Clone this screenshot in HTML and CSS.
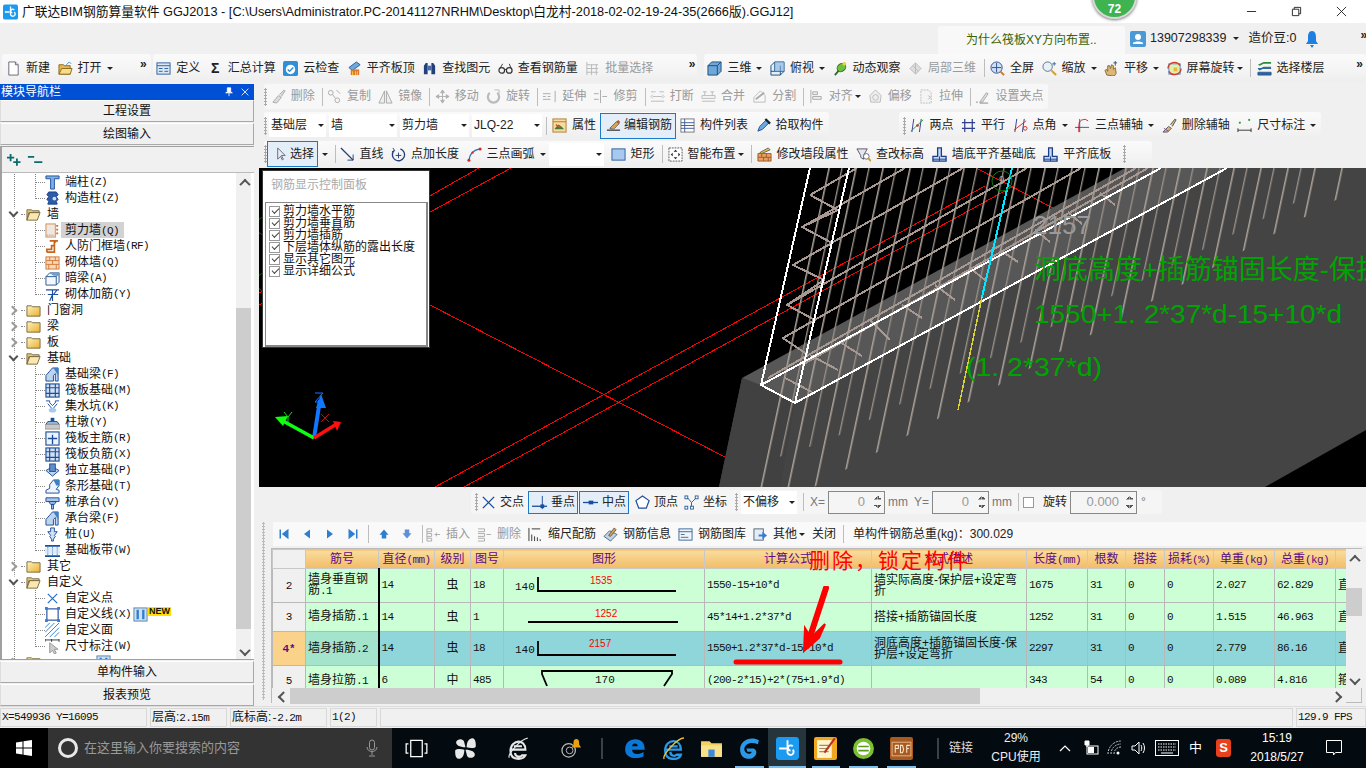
FILE: index.html
```html
<!DOCTYPE html>
<html lang="zh-CN">
<head>
<meta charset="utf-8">
<title>广联达BIM钢筋算量软件 GGJ2013</title>
<link rel="stylesheet" href="styles.css">
</head>
<body>
<svg class="defs" xmlns="http://www.w3.org/2000/svg">
<symbol id="doc" viewBox="0 0 16 16"><path d="M3 1h7l3 3v11H3z" fill="#fff" stroke="#667"/><path d="M10 1v3h3" fill="#dde" stroke="#667"/></symbol>
<symbol id="open" viewBox="0 0 16 16"><path d="M1 4h5l1 1h6v9H1z" fill="#e8b84a" stroke="#8a6a20"/><path d="M1 14l3-6h11l-2 6z" fill="#f8dc8a" stroke="#8a6a20"/><path d="M9 4l3-3 2 2" fill="none" stroke="#3a8ad0"/></symbol>
<symbol id="def" viewBox="0 0 16 16"><rect x="1" y="2" width="14" height="12" fill="#dbe8f6" stroke="#2d5f9e"/><path d="M1 5h14M3 8h4M3 11h4M9 8h4M9 11h4" stroke="#2d5f9e"/></symbol>
<symbol id="cloud" viewBox="0 0 16 16"><rect x="0" y="0" width="16" height="16" rx="2" fill="#2f8fd8"/><circle cx="8" cy="9" r="5" fill="#fff"/><path d="M5 9l2 2 4-4" fill="none" stroke="#2f8fd8" stroke-width="1.6"/></symbol>
<symbol id="flat" viewBox="0 0 16 16"><path d="M2 7l8-6 4 3-8 6z" fill="#6fa8dc" stroke="#2d5f9e"/><rect x="4" y="9" width="9" height="6" fill="#d9772a"/><path d="M6 15v-4M9 15v-4M11 15v-4" stroke="#ffd24a"/></symbol>
<symbol id="binoc" viewBox="0 0 16 16"><path d="M2 14V5l2-3h2v12zM10 14V2h2l2 3v9z" fill="#22407a"/><rect x="6" y="5" width="4" height="5" fill="#4a6aa8"/></symbol>
<symbol id="glass" viewBox="0 0 16 16"><circle cx="4" cy="10" r="3" fill="none" stroke="#333" stroke-width="1.3"/><circle cx="12" cy="10" r="3" fill="none" stroke="#333" stroke-width="1.3"/><path d="M7 9h2M2 8l3-5M14 8l-2-5" stroke="#333"/></symbol>
<symbol id="batch" viewBox="0 0 16 16"><path d="M2 1v14M2 4h12M2 8h12M2 12h12M7 4v11M12 4v11" stroke="#b8b8b8" fill="none"/></symbol>
<symbol id="cube" viewBox="0 0 16 16"><path d="M1 5l4-4h10v10l-4 4H1z" fill="#6fa8d8" stroke="#1c4d7c"/><path d="M1 5h10v10M11 5l4-4" fill="none" stroke="#1c4d7c"/></symbol>
<symbol id="cubew" viewBox="0 0 16 16"><path d="M1 5l4-4h10v10l-4 4H1z" fill="#e4eff9" stroke="#1c4d7c"/><path d="M5 1v10H1M5 11h10M11 5v10" fill="none" stroke="#1c4d7c"/><path d="M5 1h10v10H5z" fill="#7fb0dc" fill-opacity=".6"/></symbol>
<symbol id="orbit" viewBox="0 0 16 16"><path d="M2 15l6-7" stroke="#2b6a2b" stroke-width="2"/><ellipse cx="9" cy="7" rx="5" ry="4" fill="#6fbf3a" stroke="#2b6a2b" transform="rotate(-40 9 7)"/><circle cx="12" cy="3" r="2" fill="#e8d23a"/></symbol>
<symbol id="local" viewBox="0 0 16 16"><path d="M2 8l6-6 6 6-6 6z" fill="#ddd" stroke="#bbb"/><path d="M5 5l6 6M8 2v12" stroke="#bbb"/></symbol>
<symbol id="full" viewBox="0 0 16 16"><circle cx="7" cy="7" r="6" fill="#cfe0f4" stroke="#2d4f8e"/><path d="M7 2v10M2 7h10" stroke="#2d4f8e"/><path d="M11 11l4 4" stroke="#c87a2a" stroke-width="2"/></symbol>
<symbol id="zoom" viewBox="0 0 16 16"><circle cx="6" cy="6" r="5" fill="#e8f0f8" stroke="#5a6f8a"/><path d="M10 10l5 5" stroke="#d0a030" stroke-width="2.2"/><path d="M13 1v4M11 3h4" stroke="#3a6a9a"/></symbol>
<symbol id="pan" viewBox="0 0 16 16"><path d="M3 15l-2-5 2-1 1 2V5l2 0 1 3 1-4 2 1 0 4 2-2 1 6-2 3z" fill="#dcb878" stroke="#8a6a30"/><path d="M12 0v5M10 2h4" stroke="#33507a"/></symbol>
<symbol id="rot" viewBox="0 0 16 16"><rect x="2" y="3" width="12" height="11" fill="#dff0b0" stroke="#4a8ac8"/><path d="M1 8a7 7 0 0 1 13-3M15 8a7 7 0 0 1-13 3" fill="none" stroke="#d83a2a" stroke-width="1.5"/><rect x="7" y="7" width="4" height="4" fill="#e8b83a"/></symbol>
<symbol id="layer" viewBox="0 0 16 16"><path d="M1 4l6-3h8v2H7L3 5zM1 9l6-3h8v2H7L3 10z" fill="#2d8a3a"/><path d="M1 12h14v3H1zM1 8h14" fill="#2d5f9e" stroke="#2d5f9e"/></symbol>
<symbol id="g-brush" viewBox="0 0 16 16"><path d="M2 14l6-7 3 2-5 6zM9 6l5-5 1 1-4 6" fill="#ddd" stroke="#aaa"/></symbol>
<symbol id="g-copy" viewBox="0 0 16 16"><circle cx="4" cy="4" r="2.5" fill="none" stroke="#aaa"/><circle cx="11" cy="12" r="2.5" fill="none" stroke="#aaa"/><path d="M6 6l3 4M10 1l4 4" stroke="#aaa"/></symbol>
<symbol id="g-mir" viewBox="0 0 16 16"><path d="M7 2L1 15h6zM9 2l6 13H9z" fill="#eee" stroke="#aaa"/></symbol>
<symbol id="g-move" viewBox="0 0 16 16"><path d="M8 1v14M1 8h14M8 1L6 4h4zM8 15l-2-3h4zM1 8l3-2v4zM15 8l-3-2v4z" fill="#bbb" stroke="#b0b0b0"/></symbol>
<symbol id="g-rot" viewBox="0 0 16 16"><path d="M12 4a6 6 0 1 1-8 0" fill="none" stroke="#bbb" stroke-width="2.4"/><path d="M9 1h5v4" fill="none" stroke="#bbb"/></symbol>
<symbol id="g-ext" viewBox="0 0 16 16"><path d="M14 2v12M1 8h3M6 8h3M9 5h-8M9 11H1" stroke="#aaa" fill="none"/></symbol>
<symbol id="g-trim" viewBox="0 0 16 16"><path d="M8 1v14M1 5h5M1 11h5M10 8h5" stroke="#aaa" fill="none"/></symbol>
<symbol id="g-brk" viewBox="0 0 16 16"><path d="M1 3h5M10 3h5M1 13h14M3 8h10M13 6l2 2-2 2M3 6L1 8l2 2" stroke="#bbb" fill="none"/></symbol>
<symbol id="g-mrg" viewBox="0 0 16 16"><path d="M1 7h14v3H1zM1 13h14M4 7V3M12 7V3M2 3h4M10 3h4" stroke="#bbb" fill="none"/></symbol>
<symbol id="g-spl" viewBox="0 0 16 16"><path d="M2 14h12V7L9 2 2 9z" fill="none" stroke="#bbb"/><path d="M4 11l9-7" stroke="#aaa" stroke-width="2"/></symbol>
<symbol id="g-ali" viewBox="0 0 16 16"><path d="M2 1v14M4 3h5v3H4zM4 8h9v3H4z" fill="#eee" stroke="#aaa"/></symbol>
<symbol id="g-off" viewBox="0 0 16 16"><path d="M8 1l6 6-1 7H3L2 7z" fill="#eee" stroke="#bbb"/><circle cx="8" cy="9" r="3" fill="none" stroke="#bbb"/></symbol>
<symbol id="g-str" viewBox="0 0 16 16"><path d="M2 1h8l3 3v11H2z" fill="#f4f4f4" stroke="#bbb" stroke-dasharray="2 1"/><path d="M10 7l2 2-2 2" stroke="#aaa" fill="none"/></symbol>
<symbol id="g-grip" viewBox="0 0 16 16"><path d="M5 14l7-10 2 1-6 9z" fill="#ddd" stroke="#aaa"/><path d="M1 14h2M5 15h9" stroke="#888"/></symbol>
<symbol id="attr" viewBox="0 0 16 16"><rect x="1" y="1" width="14" height="14" fill="#f6dca0" stroke="#b07a30"/><path d="M1 4h14" stroke="#b07a30"/><path d="M3 11l4-4 3 2 3 3H3z" fill="#4a7a3a"/><path d="M4 7l5 3" stroke="#d0582a" stroke-width="1.6"/></symbol>
<symbol id="edit" viewBox="0 0 16 16"><path d="M1 13h14" stroke="#555" stroke-width="1.6"/><path d="M4 11l7-7 3 2-6 6z" fill="#d8a850" stroke="#666"/><path d="M11 4l2-2 2 2-1 2" fill="#c05030"/></symbol>
<symbol id="list" viewBox="0 0 16 16"><rect x="1" y="1" width="14" height="14" fill="#fff" stroke="#777"/><path d="M1 5h14M1 8h14M1 11h14M5 1v14" stroke="#3a5a9a"/></symbol>
<symbol id="pick" viewBox="0 0 16 16"><path d="M2 14l2-5 7-7 3 3-7 7z" fill="#6fa8e0" stroke="#1c4d9c"/><path d="M10 1l5 5" stroke="#123" stroke-width="2.4"/></symbol>
<symbol id="two" viewBox="0 0 16 16"><path d="M4 1L2 15M12 1l-2 14" stroke="#2d3f8e" fill="none"/><path d="M1 14L14 2" stroke="#2a9a3a"/><circle cx="8" cy="8" r="1.4" fill="#d02a2a"/></symbol>
<symbol id="para" viewBox="0 0 16 16"><path d="M4 1v14M12 1v14M1 5h14M1 11h14" stroke="#2d3f8e" stroke-width="1.3" fill="none"/></symbol>
<symbol id="ang" viewBox="0 0 16 16"><path d="M4 1L2 15M12 1l-2 14" stroke="#2d3f8e" fill="none"/><path d="M1 13L14 3" stroke="#d02a2a"/><circle cx="13" cy="11" r="2" fill="none" stroke="#d02a2a"/></symbol>
<symbol id="arc3" viewBox="0 0 16 16"><path d="M4 15V8a6 6 0 0 1 10-5" fill="none" stroke="#d02a2a"/><path d="M0 10h15M5 1v14" stroke="#2d3f8e" stroke-width=".9"/></symbol>
<symbol id="delaxis" viewBox="0 0 16 16"><path d="M1 15l6-6 3 2-4 4zM9 7l5-6 1 1-4 7" fill="#d8b878" stroke="#555"/><path d="M2 11l5 3" stroke="#7a4ac0"/></symbol>
<symbol id="dim" viewBox="0 0 16 16"><path d="M1 11v4M15 11v4M1 13h14" stroke="#333"/><rect x="2" y="4" width="2" height="2" fill="#2a9a3a"/><rect x="12" y="1" width="2" height="2" fill="#2a9a3a"/></symbol>
<symbol id="arrow" viewBox="0 0 16 16"><path d="M5 1v12l3-3 2 4 1-1-2-4h4z" fill="#e8eef6" stroke="#667"/></symbol>
<symbol id="line" viewBox="0 0 16 16"><path d="M1 1l13 13" stroke="#223f7a" stroke-width="1.4"/><path d="M14 8v6H8" fill="none" stroke="#223f7a"/></symbol>
<symbol id="addlen" viewBox="0 0 16 16"><path d="M10 2a6.500 6.500 0 1 1-7 2" fill="none" stroke="#223f7a" stroke-width="1.4"/><path d="M8 6v6M5 9h6" stroke="#223f7a"/><path d="M2 1l2 3-3 1" fill="none" stroke="#223f7a"/></symbol>
<symbol id="arc" viewBox="0 0 16 16"><path d="M2 14C3 7 7 3 14 2" fill="none" stroke="#2f6fb0" stroke-width="1.4"/><circle cx="2" cy="14" r="1.600" fill="#d02a2a"/><circle cx="14" cy="2" r="1.600" fill="#d02a2a"/><circle cx="6" cy="6" r="1.200" fill="#d02a2a"/></symbol>
<symbol id="rect" viewBox="0 0 16 16"><rect x="1" y="2" width="14" height="12" fill="#a8c8f0" stroke="#2d5f9e"/></symbol>
<symbol id="smart" viewBox="0 0 16 16"><rect x="1" y="1" width="14" height="14" fill="#fff" stroke="#555" stroke-dasharray="2 1"/><path d="M8 3v10M3 8h10M8 3L6 5h4zM8 13l-2-2h4zM3 8l2-2v4zM13 8l-2-2v4z" fill="#223"/></symbol>
<symbol id="wallpen" viewBox="0 0 16 16"><path d="M1 7h14v8H1z" fill="#e8a068" stroke="#a05a20"/><path d="M1 11h14M5 7v4M10 7v4M7 11v4M12 11v4" stroke="#a05a20"/><path d="M3 6l9-5 2 2-9 4z" fill="#e8c050" stroke="#665"/></symbol>
<symbol id="lvl" viewBox="0 0 16 16"><path d="M1 2h11L8 9v4L5 11V9z" fill="#e4e8ee" stroke="#556"/><circle cx="11" cy="10" r="3" fill="#fff" stroke="#667"/><path d="M13 12l3 3" stroke="#c89a30" stroke-width="2"/></symbol>
<symbol id="wbase" viewBox="0 0 16 16"><path d="M6 1h4v9h5v5H1v-5h5z" fill="#c8dcf4" stroke="#1c3f8c" stroke-width="1.4"/><path d="M1 13h14M8 10v5" stroke="#1c3f8c"/></symbol>
<symbol id="sx" viewBox="0 0 16 16"><path d="M2 2l12 12M14 2L2 14" stroke="#1c4d9c" stroke-width="1.5"/></symbol>
<symbol id="sperp" viewBox="0 0 16 16"><path d="M0 12h16" stroke="#1c4d9c" stroke-width="1.4"/><path d="M11 1v14" stroke="#1c4d9c"/><rect x="9" y="10" width="4" height="4" fill="#1c4d9c"/></symbol>
<symbol id="smid" viewBox="0 0 16 16"><path d="M0 8h16" stroke="#1c4d9c" stroke-width="1.4"/><rect x="6" y="6" width="5" height="4" fill="#1c4d9c"/></symbol>
<symbol id="spent" viewBox="0 0 16 16"><path d="M8 1l7 5-3 8H4L1 6z" fill="#fff" stroke="#1c4d9c" stroke-width="1.3"/></symbol>
<symbol id="scoord" viewBox="0 0 16 16"><path d="M3 2l5 6 6-6M8 8v6" stroke="#2d5f9e" fill="none"/><g fill="#fff" stroke="#2d5f9e"><rect x="1" y="1" width="3" height="3"/><rect x="12" y="1" width="3" height="3"/><rect x="1" y="12" width="3" height="3"/><rect x="7" y="12" width="3" height="3"/></g></symbol>
<symbol id="first" viewBox="0 0 16 16"><path d="M2 2h2v12H2zM14 1L5 8l9 7z" fill="#2f7fd0"/></symbol>
<symbol id="prev" viewBox="0 0 16 16"><path d="M12 2L4 8l8 6z" fill="#2f7fd0"/></symbol>
<symbol id="next" viewBox="0 0 16 16"><path d="M4 2l8 6-8 6z" fill="#2f7fd0"/></symbol>
<symbol id="last" viewBox="0 0 16 16"><path d="M12 2h2v12h-2zM2 1l9 7-9 7z" fill="#2f7fd0"/></symbol>
<symbol id="up" viewBox="0 0 16 16"><path d="M8 2l6 7h-3v5H5V9H2z" fill="#2f7fd0"/></symbol>
<symbol id="down" viewBox="0 0 16 16"><path d="M8 14l6-7h-3V2H5v5H2z" fill="#5f8fd8"/></symbol>
<symbol id="ins" viewBox="0 0 16 16"><path d="M1 2h5v3H1M1 7h5v3H1M1 12h5v3H1M1 2v13M9 8h6M11 6v4" stroke="#aaa" fill="none"/></symbol>
<symbol id="rem" viewBox="0 0 16 16"><path d="M1 2h7v3H1M1 7h7v3H1M1 12h7v3H1M10 8h5" stroke="#aaa" fill="none"/></symbol>
<symbol id="scale" viewBox="0 0 16 16"><path d="M1 1v14M4 8v7M7 10v5M10 11v4M13 13v2M4 2h9" stroke="#333" fill="none"/></symbol>
<symbol id="info" viewBox="0 0 16 16"><path d="M1 10l6-6 8 4-7 7z" fill="#bcd4ec" stroke="#567"/><path d="M6 9l6-8 2 2-6 7z" fill="#d8a850" stroke="#654"/></symbol>
<symbol id="lib" viewBox="0 0 16 16"><rect x="1" y="2" width="14" height="12" fill="#eef4fb" stroke="#3a6a9a"/><path d="M1 5h14" stroke="#3a6a9a"/><path d="M3 8h4M3 11h8" stroke="#567"/></symbol>
<symbol id="other" viewBox="0 0 16 16"><rect x="1" y="2" width="10" height="12" fill="#e4ecf6" stroke="#567"/><path d="M6 8h4V5l5 4-5 4v-3H6z" fill="#3a7ad0"/></symbol>
<symbol id="fo" viewBox="0 0 16 16"><path d="M1 3h5l1 1h7v2H3l-2 8z" fill="#e8c878" stroke="#7a6a40"/><path d="M1 14l3-8h11l-3 8z" fill="#fbe8b0" stroke="#7a6a40"/></symbol>
<symbol id="fc" viewBox="0 0 16 16"><path d="M1 3h5l1 1h8v10H1z" fill="url(#fg)" stroke="#7a6a40"/></symbol>
<linearGradient id="fg" x1="0" y1="0" x2="1" y2="1"><stop offset="0" stop-color="#fff3c0"/><stop offset="1" stop-color="#e8b030"/></linearGradient>
<symbol id="ta" viewBox="0 0 16 16"><path d="M1 1h14v3H10v11H6V4H1z" fill="#7fb0e4" stroke="#1c4d9c"/></symbol>
<symbol id="tb" viewBox="0 0 16 16"><path d="M4 1h8l2 3-2 2 2 3-2 2 1 3H3l1-3-2-2 2-3-2-2z" fill="#2a5ca8" stroke="#1c3f8c"/><circle cx="10" cy="8" r="2" fill="#cfe0f4"/></symbol>
<symbol id="tc" viewBox="0 0 16 16"><rect x="1" y="1" width="10" height="14" fill="#f0e8e0" stroke="#d08a50"/><path d="M13 2v12" stroke="#d06a20" stroke-dasharray="2 2" stroke-width="2"/><path d="M2 13h8" stroke="#888" stroke-dasharray="1 1"/></symbol>
<symbol id="td" viewBox="0 0 16 16"><path d="M2 14h8V2h3v1M5 2h6v2M2 14v-3h5V7h3" fill="none" stroke="#c8641e" stroke-width="1.8"/></symbol>
<symbol id="te" viewBox="0 0 16 16"><rect x="1" y="2" width="14" height="13" fill="#f8d8b8" stroke="#d07a3a"/><path d="M1 6h14M1 10h14M5 2v4M11 2v4M8 6v4M4 10v5M12 10v5" stroke="#d07a3a"/></symbol>
<symbol id="tf" viewBox="0 0 16 16"><path d="M1 6l4-4h10v10l-3 3H1z" fill="#f4f8fc" stroke="#25588f"/><path d="M1 6h11v9M12 6l3-4" fill="none" stroke="#25588f"/><path d="M5 2h10v3H9z" fill="#6f9fd0"/></symbol>
<symbol id="tg" viewBox="0 0 16 16"><path d="M1 3h14M8 3v12M3 3h10l-4 5M3 8h11M5 15l3-7" fill="none" stroke="#1c4d9c" stroke-width="1.2"/></symbol>
<symbol id="th" viewBox="0 0 16 16"><path d="M1 15V9l7-8h6v14h-3V7l-2 2v6z" fill="#bcd4ec" stroke="#1c4d9c"/><path d="M9 1h5v8z" fill="#3f7fc4"/></symbol>
<symbol id="ti" viewBox="0 0 16 16"><rect x="1" y="1" width="14" height="14" fill="#cfe0f4" stroke="#1c4d9c" stroke-width="1.2"/><path d="M1 5h14M1 11h14M5 1v14M11 1v14" stroke="#1c4d9c" stroke-width="1.2"/></symbol>
<symbol id="tj" viewBox="0 0 16 16"><path d="M1 2h4v2l3 3 3-3V2h4M3 5l5 6 5-6" fill="none" stroke="#1c4d9c"/><ellipse cx="8" cy="12" rx="4" ry="2.500" fill="#a8c8f0"/></symbol>
<symbol id="tk" viewBox="0 0 16 16"><rect x="6" y="3" width="4" height="4" fill="#1c4d9c"/><path d="M3 7h10l2 3H1z" fill="#9cc0e4" stroke="#1c4d9c"/><rect x="0" y="10" width="16" height="5" fill="#c8c8c8" stroke="#999"/></symbol>
<symbol id="tl" viewBox="0 0 16 16"><rect x="1" y="1" width="14" height="14" fill="#eef4fb" stroke="#1c4d9c" stroke-width="1.2"/><path d="M8 4v10M3 8h10" stroke="#1c4d9c" stroke-width="1.4"/></symbol>
<symbol id="tn" viewBox="0 0 16 16"><path d="M1 8l7-4 7 4-7 6z" fill="#bcd4ec" stroke="#1c4d9c"/><rect x="5" y="1" width="6" height="8" fill="#5f8fc8" stroke="#1c4d9c"/></symbol>
<symbol id="to" viewBox="0 0 16 16"><path d="M1 15v-3l4-2V6l4-5h6v6l-3 4 3 1v3z" fill="#eef4fb" stroke="#1c4d9c"/><path d="M9 1h6v6h-3z" fill="#3f7fc4"/></symbol>
<symbol id="tp" viewBox="0 0 16 16"><path d="M1 3h14v4H1zM4 7h8l-2 3H6zM7 10h2v5H7z" fill="#a8c8f0" stroke="#1c4d9c"/></symbol>
<symbol id="tq" viewBox="0 0 16 16"><path d="M6 1h4v4h3l-3 4 1 1-2 3v2H7v-2l-2-3 1-1-3-4h3z" fill="#cfe0f4" stroke="#1c4d9c"/></symbol>
<symbol id="tr" viewBox="0 0 16 16"><path d="M0 3h16M0 14h16" stroke="#1c4d9c" stroke-width="2"/><path d="M3 3v11M8 3v11M13 3v11" stroke="#3f7fc4"/><rect x="0" y="5" width="16" height="7" fill="#cfe0f4" fill-opacity=".6"/></symbol>
<symbol id="ts" viewBox="0 0 16 16"><path d="M3 3l10 10M13 3L3 13" stroke="#2a6fc0" stroke-width="1.3"/></symbol>
<symbol id="tt" viewBox="0 0 16 16"><rect x="2" y="2" width="12" height="12" fill="#fff" stroke="#1c4d9c" stroke-width="1.2"/><g fill="#2f7fe0"><rect y="0" width="3" height="3"/><rect x="13" width="3" height="3"/><rect y="13" width="3" height="3"/><rect x="13" y="13" width="3" height="3"/></g></symbol>
<symbol id="tu" viewBox="0 0 16 16"><path d="M0 5l5-5M0 10L10 0M0 15L15 0M5 15L15 5M10 15l5-5" stroke="#2f7fd0"/></symbol>
<symbol id="tv" viewBox="0 0 16 16"><path d="M0 1h15M0 0v3M7 0v3M15 0v3" stroke="#333"/><path d="M5 4v11l3-3 2 4 2-1-2-4h4z" fill="#ccc" stroke="#999"/></symbol>
<symbol id="cfg" viewBox="0 0 16 16"><rect x="1" y="1" width="14" height="14" fill="#cfe0f4" stroke="#5a7fa8"/><path d="M5 3v10M11 3v10" stroke="#2f7fd0" stroke-width="2.500"/></symbol>
<symbol id="appmark" viewBox="0 0 16 16"><rect width="16" height="16" rx="2" fill="#1a9af0"/><path d="M8 2v8a2.500 2.500 0 1 0 4-2M2 8h5M12 6a2 2 0 1 0-2 3" fill="none" stroke="#fff" stroke-width="1.400"/></symbol>
</svg>

<header class="titlebar">
  <span class="appicon"><svg><use href="#appmark"/></svg></span>
  <span class="titletext">广联达BIM钢筋算量软件 GGJ2013 - [C:\Users\Administrator.PC-20141127NRHM\Desktop\白龙村-2018-02-02-19-24-35(2666版).GGJ12]</span>
  <div class="winctl">
    <svg viewBox="0 0 12 12"><path d="M1 6h10" stroke="#222"/></svg>
    <svg viewBox="0 0 12 12"><path d="M1.500 3.500h7v7h-7zM3.500 3.500v-2h7v7h-2" fill="none" stroke="#222"/></svg>
    <svg viewBox="0 0 12 12"><path d="M1 1l10 10M11 1L1 11" stroke="#222"/></svg>
  </div>
</header>
<div class="badge">72</div>

<div class="newsrow">
  <div class="bubble">为什么筏板XY方向布置..</div>
  <div class="user">
    <svg class="i" viewBox="0 0 16 16"><rect width="16" height="16" rx="2" fill="#4a9ad8"/><circle cx="8" cy="6" r="3" fill="#fff"/><path d="M3 13h10v-1c-1-2-9-2-10 0z" fill="#fff"/></svg>
    <span>13907298339</span><i class="caret"></i>
    <span class="bean">造价豆:0</span>
    <svg class="bell" viewBox="0 0 12 18"><path d="M6 1c3 0 4 3 4 6v4l2 3H0l2-3V7c0-3 1-6 4-6z" fill="#1e7fe0"/><path d="M4 15h4l-2 3z" fill="#1e7fe0"/></svg>
  </div>
  <span class="more">»</span>
</div>

<div class="toolrow top">
  <div class="grp g-file">
    <span class="t"><svg class="i"><use href="#doc"/></svg><b>新建</b></span>
    <span class="t"><svg class="i"><use href="#open"/></svg><b>打开</b><i class="caret"></i></span>
    <span class="more m-file">»</span>
  </div>
  <div class="grp g-calc">
    <span class="t"><svg class="i"><use href="#def"/></svg><b>定义</b></span>
    <span class="t"><em class="sigma">Σ</em><b>汇总计算</b></span>
    <span class="t"><svg class="i"><use href="#cloud"/></svg><b>云检查</b></span>
    <span class="t"><svg class="i"><use href="#flat"/></svg><b>平齐板顶</b></span>
    <span class="t"><svg class="i"><use href="#binoc"/></svg><b>查找图元</b></span>
    <span class="t"><svg class="i"><use href="#glass"/></svg><b>查看钢筋量</b></span>
    <span class="t off"><svg class="i"><use href="#batch"/></svg><b>批量选择</b></span>
    <span class="more m-calc">»</span>
  </div>
  <div class="grp g-view">
    <span class="t"><svg class="i"><use href="#cube"/></svg><b>三维</b><i class="caret"></i></span>
    <span class="t"><svg class="i"><use href="#cubew"/></svg><b>俯视</b><i class="caret"></i></span>
    <span class="t"><svg class="i"><use href="#orbit"/></svg><b>动态观察</b></span>
    <span class="t off"><svg class="i"><use href="#local"/></svg><b>局部三维</b></span>
    <i class="sep"></i>
    <span class="t"><svg class="i"><use href="#full"/></svg><b>全屏</b></span>
    <span class="t"><svg class="i"><use href="#zoom"/></svg><b>缩放</b><i class="caret"></i></span>
    <span class="t"><svg class="i"><use href="#pan"/></svg><b>平移</b><i class="caret"></i></span>
    <span class="t"><svg class="i"><use href="#rot"/></svg><b>屏幕旋转</b><i class="caret near"></i></span>
    <i class="sep"></i>
    <span class="t"><svg class="i"><use href="#layer"/></svg><b>选择楼层</b></span>
    <span class="more m-view">»</span>
  </div>
</div>

<div class="workspace">
  <aside class="nav">
    <div class="navhead"><span>模块导航栏</span><span class="navctl"><svg viewBox="0 0 12 12"><path d="M4 1h4v5l2 1H2l2-1zM6 7v4" fill="#fff" stroke="#fff"/></svg><svg viewBox="0 0 12 12"><path d="M2 2l8 8M10 2l-8 8" stroke="#fff"/></svg></span></div>
    <div class="navbtn">工程设置</div>
    <div class="navbtn">绘图输入</div>
    <div class="treebox">
      <div class="treetools"><svg viewBox="0 0 20 14"><path d="M3 1h2v3h3v2H5v3H3V6H0V4h3zM10 6h2v3h3v2h-3v3h-2v-3H7V9h3z" fill="#0d6a6a"/></svg><svg viewBox="0 0 20 14"><path d="M1 3h7v2H1zM8 9h9v2H8z" fill="#0d6a6a"/></svg></div>
      <div class="treewrap">
        <div class="tree">
          <div class="leaf"><i class="dash"></i><svg class="ti"><use href="#ta"/></svg>端柱<u>(Z)</u></div>
          <div class="leaf last"><i class="dash"></i><svg class="ti"><use href="#tb"/></svg>构造柱<u>(Z)</u></div>
          <div class="node"><i class="chev open"></i><i class="dash d2"></i><svg class="fi"><use href="#fo"/></svg>墙</div>
          <div class="leaf sel"><i class="dash"></i><svg class="ti"><use href="#tc"/></svg><span>剪力墙<u>(Q)</u></span></div>
          <div class="leaf"><i class="dash"></i><svg class="ti"><use href="#td"/></svg>人防门框墙<u>(RF)</u></div>
          <div class="leaf"><i class="dash"></i><svg class="ti"><use href="#te"/></svg>砌体墙<u>(Q)</u></div>
          <div class="leaf"><i class="dash"></i><svg class="ti"><use href="#tf"/></svg>暗梁<u>(A)</u></div>
          <div class="leaf last"><i class="dash"></i><svg class="ti"><use href="#tg"/></svg>砌体加筋<u>(Y)</u></div>
          <div class="node"><i class="chev"></i><i class="dash d2"></i><svg class="fi"><use href="#fc"/></svg>门窗洞</div>
          <div class="node"><i class="chev"></i><i class="dash d2"></i><svg class="fi"><use href="#fc"/></svg>梁</div>
          <div class="node"><i class="chev"></i><i class="dash d2"></i><svg class="fi"><use href="#fc"/></svg>板</div>
          <div class="node"><i class="chev open"></i><i class="dash d2"></i><svg class="fi"><use href="#fo"/></svg>基础</div>
          <div class="leaf"><i class="dash"></i><svg class="ti"><use href="#th"/></svg>基础梁<u>(F)</u></div>
          <div class="leaf"><i class="dash"></i><svg class="ti"><use href="#ti"/></svg>筏板基础<u>(M)</u></div>
          <div class="leaf"><i class="dash"></i><svg class="ti"><use href="#tj"/></svg>集水坑<u>(K)</u></div>
          <div class="leaf"><i class="dash"></i><svg class="ti"><use href="#tk"/></svg>柱墩<u>(Y)</u></div>
          <div class="leaf"><i class="dash"></i><svg class="ti"><use href="#tl"/></svg>筏板主筋<u>(R)</u></div>
          <div class="leaf"><i class="dash"></i><svg class="ti"><use href="#ti"/></svg>筏板负筋<u>(X)</u></div>
          <div class="leaf"><i class="dash"></i><svg class="ti"><use href="#tn"/></svg>独立基础<u>(P)</u></div>
          <div class="leaf"><i class="dash"></i><svg class="ti"><use href="#to"/></svg>条形基础<u>(T)</u></div>
          <div class="leaf"><i class="dash"></i><svg class="ti"><use href="#tp"/></svg>桩承台<u>(V)</u></div>
          <div class="leaf"><i class="dash"></i><svg class="ti"><use href="#th"/></svg>承台梁<u>(F)</u></div>
          <div class="leaf"><i class="dash"></i><svg class="ti"><use href="#tq"/></svg>桩<u>(U)</u></div>
          <div class="leaf last"><i class="dash"></i><svg class="ti"><use href="#tr"/></svg>基础板带<u>(W)</u></div>
          <div class="node"><i class="chev"></i><i class="dash d2"></i><svg class="fi"><use href="#fc"/></svg>其它</div>
          <div class="node"><i class="chev open"></i><i class="dash d2"></i><svg class="fi"><use href="#fo"/></svg>自定义</div>
          <div class="leaf"><i class="dash"></i><svg class="ti"><use href="#ts"/></svg>自定义点</div>
          <div class="leaf"><i class="dash"></i><svg class="ti"><use href="#tt"/></svg>自定义线<u>(X)</u><svg class="cfg"><use href="#cfg"/></svg><span class="new">NEW</span></div>
          <div class="leaf"><i class="dash"></i><svg class="ti"><use href="#tu"/></svg>自定义面</div>
          <div class="leaf last"><i class="dash"></i><svg class="ti"><use href="#tv"/></svg>尺寸标注<u>(W)</u></div>
          <div class="node"><i class="chev"></i><i class="dash d2"></i><svg class="fi"><use href="#fc"/></svg><i class="pad"></i><svg class="cfg"><use href="#cfg"/></svg></div>
        </div>
        <div class="vbar treebar"><i class="a-up"></i><div class="tr1"></div><div class="th1"></div><div class="tr2"></div><i class="a-dn"></i></div>
      </div>
    </div>
    <div class="navbtn">单构件输入</div>
    <div class="navbtn endbtn">报表预览</div>
  </aside>

  <main class="work">
    <div class="row r-edit">
      <div class="grp">
        <i class="handle"></i>
        <span class="t off"><svg class="i"><use href="#g-brush"/></svg><b>删除</b></span><i class="sep"></i>
        <span class="t off"><svg class="i"><use href="#g-copy"/></svg><b>复制</b></span>
        <span class="t off"><svg class="i"><use href="#g-mir"/></svg><b>镜像</b></span><i class="sep"></i>
        <span class="t off"><svg class="i"><use href="#g-move"/></svg><b>移动</b></span>
        <span class="t off"><svg class="i"><use href="#g-rot"/></svg><b>旋转</b></span><i class="sep"></i>
        <span class="t off"><svg class="i"><use href="#g-ext"/></svg><b>延伸</b></span>
        <span class="t off"><svg class="i"><use href="#g-trim"/></svg><b>修剪</b></span><i class="sep"></i>
        <span class="t off"><svg class="i"><use href="#g-brk"/></svg><b>打断</b></span>
        <span class="t off"><svg class="i"><use href="#g-mrg"/></svg><b>合并</b></span>
        <span class="t off"><svg class="i"><use href="#g-spl"/></svg><b>分割</b></span><i class="sep"></i>
        <span class="t off"><svg class="i"><use href="#g-ali"/></svg><b>对齐</b><i class="caret near"></i></span>
        <span class="t off"><svg class="i"><use href="#g-off"/></svg><b>偏移</b></span>
        <span class="t off"><svg class="i"><use href="#g-str"/></svg><b>拉伸</b></span><i class="sep"></i>
        <span class="t off"><svg class="i"><use href="#g-grip"/></svg><b>设置夹点</b></span>
      </div>
    </div>
    <div class="row r-comp">
      <div class="grp">
        <i class="handle"></i>
        <div class="combos">
          <span class="combo c57">基础层<i class="caret"></i></span>
          <span class="combo c68">墙<i class="caret"></i></span>
          <span class="combo c69">剪力墙<i class="caret"></i></span>
          <span class="combo c70">JLQ-22<i class="caret"></i></span>
        </div>
        <i class="sep pull"></i>
        <span class="t"><svg class="i"><use href="#attr"/></svg><b>属性</b></span>
        <span class="t btn b-edit"><svg class="i"><use href="#edit"/></svg><b>编辑钢筋</b></span>
        <span class="t"><svg class="i"><use href="#list"/></svg><b>构件列表</b></span>
        <span class="t"><svg class="i"><use href="#pick"/></svg><b>拾取构件</b></span>
      </div>
      <div class="grp g-axis">
        <i class="handle"></i>
        <span class="t"><svg class="i"><use href="#two"/></svg><b>两点</b></span>
        <span class="t"><svg class="i"><use href="#para"/></svg><b>平行</b></span>
        <span class="t"><svg class="i"><use href="#ang"/></svg><b>点角</b><i class="caret"></i></span>
        <span class="t"><svg class="i"><use href="#arc3"/></svg><b>三点辅轴</b><i class="caret"></i></span>
        <span class="t"><svg class="i"><use href="#delaxis"/></svg><b>删除辅轴</b></span>
        <span class="t"><svg class="i"><use href="#dim"/></svg><b>尺寸标注</b><i class="caret"></i></span>
      </div>
    </div>
    <div class="row r-draw">
      <div class="grp">
        <i class="handle"></i>
        <span class="t btn b-sel"><svg class="i"><use href="#arrow"/></svg><b>选择</b></span><i class="caret after"></i>
        <i class="sep s1"></i>
        <span class="t"><svg class="i"><use href="#line"/></svg><b>直线</b></span>
        <span class="t"><svg class="i"><use href="#addlen"/></svg><b>点加长度</b></span>
        <span class="t"><svg class="i"><use href="#arc"/></svg><b>三点画弧</b><i class="caret"></i></span>
        <span class="combo c55 pull"><i class="caret"></i></span>
        <span class="t tight"><svg class="i"><use href="#rect"/></svg><b>矩形</b></span><i class="sep"></i>
        <span class="t tight"><svg class="i"><use href="#smart"/></svg><b>智能布置</b><i class="caret near"></i></span><i class="sep"></i>
        <span class="t tight"><svg class="i"><use href="#wallpen"/></svg><b>修改墙段属性</b></span>
        <span class="t"><svg class="i"><use href="#lvl"/></svg><b>查改标高</b></span>
        <span class="t"><svg class="i"><use href="#wbase"/></svg><b>墙底平齐基础底</b></span>
        <span class="t"><svg class="i"><use href="#wbase"/></svg><b>平齐底板</b></span>
        <i class="handle h-end"></i>
      </div>
    </div>

    <div class="canvas">
      <svg class="scene" viewBox="259 168 1107 319" xmlns="http://www.w3.org/2000/svg">
        <defs>
          <pattern id="rb1" width="27" height="8" patternUnits="userSpaceOnUse" patternTransform="skewX(-12)"><rect width="1.6" height="8" fill="#aaa097"/></pattern>
          <pattern id="rb2" x="13" width="27" height="8" patternUnits="userSpaceOnUse" patternTransform="skewX(-12)"><rect width="1.4" height="8" fill="#978f88"/></pattern>
        </defs>
        <g stroke="#f00" fill="none" class="crisp">
          <path d="M259 293L479 168M259 305L511 168M430 305L725 457M976 168L1053 208"/>
          <path d="M435 487L709 337L985 186M464 487L709 353L1012 187"/>
        </g>
        <circle cx="265" cy="226" r="9" fill="none" stroke="#0a6a0a"/>
        <circle cx="265" cy="282" r="9" fill="none" stroke="#0a6a0a"/>
        <path d="M742 378L1125 168H1227L795 403Z" fill="#575757"/>
        <path d="M719 487L742 378L795 403L1227 168H1366V430L1265 487Z" fill="#444"/>
        <path d="M742 378L761 385L795 403L780 487H719Z" fill="#414141"/>
        <polygon points="745,487 814,487 1345,195 1345,168 810,168 772,330" fill="url(#rb1)"/>
        <polygon points="770,460 830,440 1310,195 1310,168 825,168 790,330" fill="url(#rb2)"/>
        <g stroke="#a89a92" stroke-width="2" fill="none" class="crisp">
          <path d="M810 195L857 168M802 227L905 168M793 265L963 168M787 305L1027 168M783 338L1081 168M768 378L1136 168M802 365L1148 168"/>
          <path d="M810 195L838 210L802 227L832 243L793 265L824 280L787 305L815 320L783 338L808 355L768 378"/>
          <path d="M785 378L812 392M810 355L838 370M840 342L862 356M870 320L890 340M902 305L922 318M935 285L955 300M970 268L985 280M1000 250L1018 262M1035 230L1050 242M1068 212L1082 224M1100 193L1115 205"/>
        </g>
        <g stroke="#fff" stroke-width="2" fill="none" class="crisp">
          <path d="M810 168L761 385L795 403L849 168M761 385L1161 168M795 403L1227 168"/>
        </g>
        <path d="M1012 168L982 297" stroke="#00e8ff" stroke-width="2" class="crisp"/>
        <path d="M982 297L958 410" stroke="#d8d030" stroke-width="1.500" class="crisp"/>
        <circle cx="1002" cy="181" r="10" fill="none" stroke="#0a7a0a"/>
        <text x="999" y="184" class="s-num">9</text>
        <text x="1033" y="234" class="s-2157" textLength="58" lengthAdjust="spacingAndGlyphs">2157</text>
        <text x="1034" y="279" class="s-green s-cjk">洞底高度+插筋锚固长度-保护层</text>
        <text x="1034" y="323" class="s-green" textLength="308" lengthAdjust="spacingAndGlyphs">1550+1. 2*37*d-15+10*d</text>
        <text x="966" y="376" class="s-green" textLength="136" lengthAdjust="spacingAndGlyphs">(1. 2*37*d)</text>
        <g>
          <path d="M314 438L320 400" stroke="#1078ff" stroke-width="4"/><path d="M321 394L316 408H326Z" fill="#1078ff"/>
          <path d="M314 438L283 421" stroke="#10ff10" stroke-width="3.500"/><path d="M275 417L288 416L283 426Z" fill="#10ff10"/>
          <path d="M314 438L335 425" stroke="#ff1010" stroke-width="3.500"/><path d="M341 422L333 421L337 431Z" fill="#ff1010"/>
          <path d="M315 393h8l-8 9h8" stroke="#1078ff" fill="none"/>
          <path d="M284 412l4 5 4-5M288 417v6" stroke="#10e010" fill="none"/>
          <path d="M321 414l8 8M329 414l-8 8" stroke="#c01010" fill="none"/>
        </g>
      </svg>
      <div class="panel">
        <div class="p-title">钢筋显示控制面板</div>
        <div class="p-list">
          <label class="chk"><i class="box"></i>剪力墙水平筋</label>
          <label class="chk"><i class="box"></i>剪力墙垂直筋</label>
          <label class="chk"><i class="box"></i>剪力墙插筋</label>
          <label class="chk"><i class="box"></i>下层墙体纵筋的露出长度</label>
          <label class="chk"><i class="box"></i>显示其它图元</label>
          <label class="chk"><i class="box"></i>显示详细公式</label>
        </div>
      </div>
    </div>

    <div class="row r-snap">
      <div class="grp">
        <i class="handle"></i>
        <span class="t"><svg class="i"><use href="#sx"/></svg><b>交点</b></span>
        <div class="duo">
          <span class="t btn"><svg class="i"><use href="#sperp"/></svg><b>垂点</b></span>
          <span class="t btn"><svg class="i"><use href="#smid"/></svg><b>中点</b></span>
        </div>
        <span class="t"><svg class="i"><use href="#spent"/></svg><b>顶点</b></span>
        <span class="t"><svg class="i"><use href="#scoord"/></svg><b>坐标</b></span>
        <i class="handle h-mid"></i>
        <span class="combo c56">不偏移<i class="caret"></i></span>
        <i class="sep"></i>
        <span class="lab x">X=</span><span class="spin s57">0<i class="arrows"></i></span><span class="lab">mm</span>
        <span class="lab">Y=</span><span class="spin s57">0<i class="arrows"></i></span><span class="lab">mm</span>
        <i class="sep"></i>
        <i class="emptybox"></i>
        <span class="lab dark">旋转</span><span class="spin s67">0.000<i class="arrows"></i></span><span class="lab deg">°</span>
      </div>
    </div>

    <div class="lower">
      <div class="tabletool">
        <span class="nv"><svg class="i"><use href="#first"/></svg></span>
        <span class="nv"><svg class="i"><use href="#prev"/></svg></span>
        <span class="nv"><svg class="i"><use href="#next"/></svg></span>
        <span class="nv"><svg class="i"><use href="#last"/></svg></span>
        <i class="sep"></i>
        <span class="nv"><svg class="i"><use href="#up"/></svg></span>
        <span class="nv"><svg class="i"><use href="#down"/></svg></span>
        <i class="sep s2"></i>
        <span class="t off"><svg class="i"><use href="#ins"/></svg><b>插入</b></span>
        <span class="t off"><svg class="i"><use href="#rem"/></svg><b>删除</b></span>
        <span class="t"><svg class="i"><use href="#scale"/></svg><b>缩尺配筋</b></span>
        <span class="t"><svg class="i"><use href="#info"/></svg><b>钢筋信息</b></span>
        <span class="t"><svg class="i"><use href="#lib"/></svg><b>钢筋图库</b></span>
        <span class="t"><svg class="i"><use href="#other"/></svg><b>其他</b><i class="caret near"></i></span>
        <span class="t"><b>关闭</b></span>
        <i class="sep"></i>
        <span class="t total"><b>单构件钢筋总重(kg)：300.029</b></span>
      </div>
      <div class="gridbox">
        <div class="gridmain">
          <div class="tablewrap">
            <table class="tbl">
              <colgroup><col class="k33"><col class="k73"><col class="k56"><col class="k36"><col class="k33"><col class="k201"><col class="k167"><col class="k155"><col class="k61"><col class="k38"><col class="k39"><col class="k49"><col class="k61"><col class="k61"><col class="k11"></colgroup>
              <thead><tr class="h19"><th class="rh"></th><th>筋号</th><th>直径<u>(mm)</u></th><th>级别</th><th>图号</th><th>图形</th><th>计算公式</th><th>公式描述</th><th>长度<u>(mm)</u></th><th>根数</th><th>搭接</th><th>损耗<u>(%)</u></th><th>单重<u>(kg)</u></th><th>总重<u>(kg)</u></th><th></th></tr></thead>
              <tbody>
                <tr class="h34">
                  <td class="rh">2</td><td class="nm">墙身垂直钢筋<u>.1</u></td><td class="num fz">14</td><td class="ctr">虫</td><td class="num">18</td>
                  <td class="shape"><svg viewBox="0 0 201 33"><text x="11" y="21" class="sh-b">140</text><path d="M34 8V22H172" fill="none" stroke="#000" stroke-width="1.800"/><text x="86" y="15" class="sh-r">1535</text></svg></td>
                  <td class="num">1550-15+10*d</td><td class="ds">墙实际高度-保护层+设定弯折</td><td class="num">1675</td><td class="num">31</td><td class="num">0</td><td class="num">0</td><td class="num">2.027</td><td class="num">62.829</td><td>直</td>
                </tr>
                <tr class="h29">
                  <td class="rh">3</td><td class="nm">墙身插筋<u>.1</u></td><td class="num fz">14</td><td class="ctr">虫</td><td class="num">1</td>
                  <td class="shape"><svg viewBox="0 0 201 28"><path d="M24 19H174" stroke="#000" stroke-width="1.800"/><text x="91" y="14" class="sh-r">1252</text></svg></td>
                  <td class="num">45*14+1.2*37*d</td><td class="ds">搭接+插筋锚固长度</td><td class="num">1252</td><td class="num">31</td><td class="num">0</td><td class="num">0</td><td class="num">1.515</td><td class="num">46.963</td><td>直</td>
                </tr>
                <tr class="h34 cur">
                  <td class="rh"><strong>4*</strong></td><td class="nm">墙身插筋<u>.2</u></td><td class="num fz">14</td><td class="ctr">虫</td><td class="num">18</td>
                  <td class="shape"><svg viewBox="0 0 201 33"><text x="11" y="21" class="sh-b">140</text><path d="M34 9V23H172" fill="none" stroke="#000" stroke-width="1.800"/><text x="85" y="15" class="sh-r">2157</text></svg></td>
                  <td class="num">1550+1.2*37*d-15+10*d</td><td class="ds">洞底高度+插筋锚固长度-保护层+设定弯折</td><td class="num">2297</td><td class="num">31</td><td class="num">0</td><td class="num">0</td><td class="num">2.779</td><td class="num">86.16</td><td>直</td>
                </tr>
                <tr class="h30">
                  <td class="rh">5</td><td class="nm">墙身拉筋<u>.1</u></td><td class="num fz">6</td><td class="ctr">中</td><td class="num">485</td>
                  <td class="shape"><svg viewBox="0 0 201 29"><path d="M43 20L38 8V5H168V8L160 20" fill="none" stroke="#000" stroke-width="1.800"/><text x="91" y="17" class="sh-b">170</text></svg></td>
                  <td class="num">(200-2*15)+2*(75+1.9*d)</td><td></td><td class="num">343</td><td class="num">54</td><td class="num">0</td><td class="num">0</td><td class="num">0.089</td><td class="num">4.816</td><td>箍</td>
                </tr>
              </tbody>
            </table>
          </div>
          <div class="hbar"><i class="a-lf"></i><div class="hth"></div><div class="htr"></div><i class="a-rt"></i></div>
        </div>
        <div class="vbar gridbar"><i class="a-up"></i><div class="gt1"></div><div class="gth"></div><div class="gt2"></div><i class="a-dn"></i></div>
      </div>
      <i class="split"></i>
    </div>
  </main>
</div>

<div class="annot">删除，锁定构件</div>
<svg class="annotdraw" viewBox="0 0 120 80" xmlns="http://www.w3.org/2000/svg"><path d="M95 2L76 60" stroke="#f00" stroke-width="6" stroke-linecap="round"/><path d="M73 65L74 42L80 52L94 38L88 52Z" fill="#f00" stroke="#f00" stroke-width="2"/><path d="M5 76H109" stroke="#f00" stroke-width="5" stroke-linecap="round"/></svg>

<footer class="status">
  <span class="cell s147 mono">X=549936 Y=16095</span>
  <span class="cell s77">层高:<u>2.15m</u></span>
  <span class="cell s97">底标高:<u>-2.2m</u></span>
  <span class="cell s47 mono">1(2)</span>
  <span class="cell grow"></span>
  <span class="cell s70 mono">129.9 FPS</span>
</footer>

<nav class="taskbar">
  <div class="startbtn"><svg viewBox="0 0 16 16"><path d="M0 2.500l6.500-1v6H0zM7.500 1.300L16 0v7.500H7.500zM0 8.500h6.500v6l-6.500-1zM7.500 8.500H16V16l-8.500-1.300z" fill="#fff"/></svg></div>
  <div class="search"><i class="ring"></i><span>在这里输入你要搜索的内容</span><svg class="mic" viewBox="0 0 12 18"><rect x="3.500" y="1" width="5" height="10" rx="2.500" fill="none" stroke="#999"/><path d="M1 8c0 6 10 6 10 0M6 13v3M3 17h6" fill="none" stroke="#999"/></svg></div>
  <div class="tk tk48"><svg viewBox="0 0 20 16"><path d="M5 1h10v14H5zM3 4H1v8h2M17 4h2v8h-2" fill="none" stroke="#fff" stroke-width="1.100"/></svg></div>
  <div class="tk tk50"><svg viewBox="0 0 20 20"><g fill="#e8e8e8"><path d="M10 9C5 9 1 7 2 4s7-3 7 1zM11 9c0-5 2-8 5-8s3 5 3 7-5 2-8 1zM9 11c0 5-2 8-5 8s-3-5-3-7 5-2 8-1zM10 11c5 0 9 2 8 5s-7 3-7-1z"/></g></svg></div>
  <div class="tk tk56"><svg viewBox="0 0 20 20"><path d="M3 11h13c0-5-3-7-6-7s-7 3-7 8 3 7 7 7c3 0 5-1 6-3h-3c-2 2-6 1-6-2M6 8h7" fill="none" stroke="#e8e8e8" stroke-width="1.800"/><path d="M2 18C0 15 12 2 18 1" fill="none" stroke="#e8e8e8"/></svg></div>
  <div class="tk tk52"><svg viewBox="0 0 24 22"><circle cx="8" cy="13" r="7" fill="none" stroke="#bbb" stroke-width="1.300"/><circle cx="9" cy="13" r="3.500" fill="none" stroke="#bbb"/><path d="M16 1c3 0 3 3 3 6l2 3H11l2-3c0-3 0-6 3-6z" fill="#e8a010"/></svg></div>
  <i class="tksep"></i>
  <div class="tk"><svg viewBox="0 0 20 20"><path d="M1 11c0-6 4-9 9-9s8 3 8 9H7c0 4 5 5 10 2v4c-7 3-16 1-16-6zm6-3h5c0-3-5-3-5 0z" fill="#0a78d8"/></svg></div>
  <div class="tk"><svg viewBox="0 0 22 22"><path d="M4 12h14c0-5-3-8-7-8s-8 3-8 9 3 8 8 8c3 0 6-1 7-4h-4c-2 2-6 1-6-3M7 9h8" fill="none" stroke="#2a9ae8" stroke-width="2.200"/><path d="M2 21C0 17 15 1 21 1" fill="none" stroke="#f0c030" stroke-width="1.300"/></svg></div>
  <div class="tk"><svg viewBox="0 0 22 18"><path d="M1 2h8l2 2h10v13H1z" fill="#f4d060"/><path d="M1 6h20v11H1z" fill="#f9e08a"/><rect x="8" y="10" width="6" height="7" fill="#3a8ad8"/></svg></div>
  <div class="tk"><svg viewBox="0 0 22 22"><path d="M20 3C12-1 2 3 2 12s8 10 12 8 5-7 1-9H8l1 3h4c0 3-6 3-7-2 0-6 7-8 13-5z" fill="#2a9ae8"/></svg></div>
  <div class="tk act"><svg viewBox="0 0 22 22"><rect width="22" height="22" rx="3" fill="#1a9af0"/><path d="M11 3v12a3 3 0 1 0 5-3M3 11h7M16 9a2.500 2.500 0 1 0-2 4" fill="none" stroke="#fff" stroke-width="1.800"/></svg></div>
  <div class="tk"><svg viewBox="0 0 22 22"><rect width="22" height="22" rx="2" fill="#f0a820"/><rect x="3" y="3" width="14" height="17" fill="#fdf4d0"/><path d="M5 8h9M5 11h9M5 14h9" stroke="#a86"/><path d="M10 15L20 1" stroke="#c03020" stroke-width="2"/></svg></div>
  <div class="tk"><svg viewBox="0 0 22 22"><circle cx="11" cy="11" r="10" fill="#7ac030"/><circle cx="11" cy="11" r="6.500" fill="#fff"/><path d="M6 9h10M6 13h10" stroke="#5a9a20" stroke-width="1.500"/></svg></div>
  <div class="tk"><svg viewBox="0 0 22 22"><rect width="22" height="22" rx="2" fill="#a85a20"/><rect x="2" y="5" width="18" height="13" fill="none" stroke="#e0b080"/><path d="M5 8v7M5 8h3v3H5M10 8v7h2l1-3-1-4zM16 8v7M16 8h3M16 11h2" stroke="#fbe8d0" fill="none"/></svg></div>
  <div class="link"><i class="tksep"></i><span>链接</span></div>
  <div class="cpu"><span>29%</span><span>CPU使用</span></div>
  <div class="tray">
    <svg class="chevup" viewBox="0 0 12 8"><path d="M1 7l5-5 5 5" fill="none" stroke="#fff" stroke-width="1.200"/></svg>
    <svg class="tr16" viewBox="0 0 16 16"><rect x="4" y="6" width="11" height="8" fill="none" stroke="#fff"/><rect x="5" y="7" width="6" height="6" fill="#fff"/><path d="M2 1v4h4V1zM4 5v2" stroke="#fff" fill="#fff"/></svg>
    <svg class="tr16" viewBox="0 0 16 16"><path d="M1 14a13 13 0 0 1 13-13M4 14a10 10 0 0 1 10-10M7 14a7 7 0 0 1 7-7" fill="none" stroke="#ccc" stroke-dasharray="2 1"/><circle cx="11" cy="13" r="1.500" fill="#fff"/></svg>
    <svg class="tr16" viewBox="0 0 16 16"><path d="M1 6h3l4-4v12l-4-4H1z" fill="none" stroke="#fff"/><path d="M10 5c1 2 1 4 0 6M12 3c2 3 2 7 0 10" fill="none" stroke="#fff"/></svg>
    <svg class="kbd" viewBox="0 0 24 16"><rect x=".5" y=".5" width="23" height="15" fill="none" stroke="#fff"/><path d="M3 4h18M3 7h18M3 10h18" stroke="#fff" stroke-dasharray="1.500 1"/><path d="M6 13h12" stroke="#fff"/></svg>
    <span class="zh">中</span>
    <span class="sogou">S</span>
  </div>
  <div class="clock"><span>15:19</span><span>2018/5/27</span></div>
  <div class="notify"><svg viewBox="0 0 16 16"><path d="M.5.500h15v12H9.500l-2 2.500v-2.500H.5z" fill="none" stroke="#fff"/></svg></div>
  <i class="ul u1"></i><i class="ul u2"></i><i class="ul u3"></i><i class="ul u4"></i><i class="ul u5"></i>
</nav>
</body>
</html>
```
FILE: styles.css
```css
*{box-sizing:border-box}
html,body{margin:0;padding:0}
body{width:1366px;height:768px;overflow:hidden;position:relative;background:#f0f0f0;color:#222;font:12px/1.2 "Liberation Sans","Noto Sans CJK SC",sans-serif}
.defs{position:absolute;width:0;height:0;overflow:hidden}
b{font-weight:400;white-space:nowrap}
i{font-style:normal;display:block}
u{text-decoration:none;font:11px "Liberation Mono",monospace;letter-spacing:-.6px}
em{font-style:normal}
svg{display:block;flex:none}

.titlebar{height:23px;background:#fff;display:flex;align-items:center;padding-left:3px}
.appicon{width:15px;height:16px;margin-right:4px}
.appicon svg{width:15px;height:16px}
.titletext{font-size:12.750px;white-space:nowrap;color:#111}
.winctl{margin-left:auto;display:flex;gap:34px;padding-right:19px}
.winctl svg{width:11px;height:11px}
.badge{position:absolute;left:1092px;top:-26px;width:45px;height:45px;border-radius:50%;background:#3eb34f;border:2px solid #d8d8d8;box-shadow:0 1px 3px #777;color:#fff;font:700 12px/1 "Liberation Sans",sans-serif;text-align:center;padding-top:27px}

.newsrow{height:31px;display:flex;align-items:center;position:relative;padding-left:938px}
.bubble{width:187px;height:28px;margin-top:3px;background:#f8f8f8;color:#3a6200;padding-left:28px;line-height:28px;border-radius:3px 3px 0 0;flex:none}
.user{display:flex;align-items:center;margin-left:5px;font-size:12.500px;flex:none;white-space:nowrap}
.user .i{width:16px;height:18px;margin-right:4px}
.user .caret{margin-left:7px}
.bean{margin-left:9px}
.bell{width:12px;height:18px;margin-left:10px}
.more{font:700 12px/1 "Liberation Sans",sans-serif;color:#222}
.newsrow .more{margin-left:42px;margin-bottom:8px}

.toolrow{height:28px;display:flex;gap:2px;margin-bottom:2px;padding-left:2px}
.grp{display:flex;align-items:center;gap:7.5px;background:linear-gradient(#fafafa,#f4f4f4 60%,#eee);border-radius:3px}
.g-file{width:149px;padding-left:4px}
.g-calc{width:546px;padding-left:3.500px}
.g-view{width:663px;margin-left:5px;padding-left:3px}
.m-file{margin-left:auto;margin-right:4px;margin-bottom:8px}
.m-calc{margin-left:auto;margin-right:2px;margin-bottom:8px}
.m-view{margin-left:auto;margin-right:3px;margin-bottom:8px}

.t{display:inline-flex;align-items:center;gap:5px;white-space:nowrap;color:#222;flex:none}
.t.off{color:#9a9a9a}
.i{width:15px;height:15px;flex:none}
.sigma{width:15px;text-align:center;font:700 14px/1 "Liberation Sans",sans-serif}
.caret{width:0;height:0;border:3px solid transparent;border-top:3.500px solid #222;border-bottom:0;margin-left:0;flex:none}
.near{margin-left:-3px}
.after{margin-left:-4px}
.sep{width:1px;height:18px;background:#bdbdbd;margin-right:-2px;flex:none}
.s1{margin-right:-4px}
.s2{margin-right:-4px}
.handle{width:3px;height:18px;flex:none;background:radial-gradient(circle,#aaa 1px,transparent 1.200px) 0 0/3px 3px;margin-right:-3.500px}

.workspace{height:622px;display:flex}
.nav{width:254px;height:622px;display:flex;flex-direction:column;flex:none}
.navhead{height:16px;flex:none;background:#0050d6;color:#fff;display:flex;justify-content:space-between;align-items:center;padding:0 4px 0 1px;font-size:12px}
.navctl{display:flex;gap:6px}
.navctl svg{width:10px;height:10px}
.navbtn{height:22px;flex:none;background:#f0f0f0;border:1px solid #a8a8a8;border-top-color:#fff;border-left-color:#ddd;text-align:center;line-height:20px;margin-bottom:1px;color:#111}
.endbtn{margin-bottom:0}
.treebox{height:514px;flex:none;display:flex;flex-direction:column;border:1px solid #a0a0a0;border-width:1px 0 1px 2px;margin-bottom:1px;background:#f0f0f0}
.treetools{height:26px;flex:none;display:flex;align-items:center;padding-left:5px;gap:4px;background:#f0f0f0;border-bottom:1px solid #bbb}
.treetools svg{width:18px;height:13px}
.treetools svg+svg{margin-left:-2px}
.treewrap{flex:1;display:flex;min-height:0;background:#fff;overflow:hidden;padding-right:3px}
.tree{flex:1;overflow:hidden;padding-top:1px;font-size:12px;color:#111}
.leaf,.node{height:16px;display:flex;align-items:center;white-space:nowrap;background:linear-gradient(#888 50%,transparent 50%) 12px 0/1px 2px repeat-y}
.leaf{padding-left:33px;background:linear-gradient(#888 50%,transparent 50%) 12px 0/1px 2px repeat-y,linear-gradient(#888 50%,transparent 50%) 33px 0/1px 2px repeat-y}
.leaf.last{background:linear-gradient(#888 50%,transparent 50%) 12px 0/1px 2px repeat-y,linear-gradient(#888 50%,transparent 50%) 33px 0/1px 2px no-repeat,linear-gradient(#888 50%,transparent 50%) 33px 2px/1px 2px no-repeat,linear-gradient(#888 50%,transparent 50%) 33px 4px/1px 2px no-repeat,linear-gradient(#888 50%,transparent 50%) 33px 6px/1px 2px no-repeat}
.dash{width:10px;height:0;border-top:1px dotted #888;flex:none}
.d2{width:4px;margin:0 1px 0 2px}
.ti{width:15px;height:15px;margin-right:5px}
.fi{width:15px;height:15px;margin-right:6px}
.pad{width:47px;flex:none}
.node{padding-left:7px}
.chev{width:7px;height:7px;border:solid #999;border-width:0 2px 2px 0;transform:rotate(-45deg);margin-right:3px;background:#fff;flex:none}
.chev.open{transform:translate(1px,-2px) rotate(45deg);border-color:#555}
.sel span{background:#d2d2d2;padding:1px 1px;margin-left:-4px;width:63px;padding-left:4px}
.cfg{width:15px;height:15px;margin-left:2px}
.new{font:700 9px/9px "Liberation Sans",sans-serif;background:#ffe000;color:#111;padding:0 1px;align-self:flex-start;margin-top:1px}
.vbar{display:flex;flex-direction:column;align-items:stretch;background:#f0f0f0;flex:none}
.treebar{width:15px}
.a-up,.a-dn{height:17px;position:relative;flex:none}
.a-up::after,.a-dn::after{content:"";position:absolute;left:50%;top:50%;width:6px;height:6px;margin:-3px;border:solid #555;border-width:2px 0 0 2px;transform:rotate(45deg) translate(1px,1px)}
.a-dn::after{transform:rotate(225deg) translate(1px,1px)}
.tr1{height:118px;flex:none}
.th1{height:321px;flex:none;background:#cdcdcd}
.tr2{flex:1}

.work{flex:1;margin-left:5px;display:flex;flex-direction:column;min-width:0}
.row{display:flex;flex:none}
.row .grp{padding-right:5px}
.r-edit{height:25px;margin:0 0 3px 5px}
.r-edit .grp{background:#f7f7f7;gap:7.200px}
.r-edit .sep{margin-right:-3px}
.r-comp{height:27px;margin:0 0 2px 5px}
.g-axis{margin-left:70px;padding-left:4px}
.combos{display:flex;gap:3px;margin-left:-2px;height:23px}
.combo{background:#fff;display:flex;align-items:center;justify-content:space-between;padding:0 2px;color:#222;height:23px;flex:none}
.c57{width:57px}.c68{width:68px}.c69{width:69px}.c70{width:70px}.c55{width:55px}.c56{width:56px}
.c55{justify-content:flex-end}
.pull{margin-left:-4px}
.btn{border:1px solid #1979ca;background:#e4eef8;height:26px;padding:0 3px 0 5px;gap:3px}
.b-edit{margin:0 -3.500px}
.b-sel{margin-left:-4px;height:26px;gap:2px}
.tight{margin-left:-1px}
.r-draw{height:26px;margin:0 0 1px 5px}
.r-draw .grp{padding-right:26px}
.h-end{margin:0 0 0 4px}

.canvas{height:319px;flex:none;background:#000;position:relative;overflow:hidden;margin-bottom:3px}
.scene{width:1107px;height:319px}
.crisp{shape-rendering:crispEdges}
.s-green{font:25px "Liberation Sans","Noto Sans CJK SC",sans-serif;fill:#00a400}
.s-cjk{font-size:27px}
.s-2157{font:26px "Liberation Sans",sans-serif;fill:#9a9a9a}
.s-num{font:10px "Liberation Sans",sans-serif;fill:#aaa}
.panel{position:absolute;left:3px;top:2px;width:168px;height:178px;background:#fff;border:1px solid #333;padding:0 0 0 2px}
.p-title{height:31px;color:#aaa;line-height:29px;padding-left:6px}
.p-list{height:145px;width:163px;border:1.500px solid #888;border-right-width:2px;border-bottom-width:2px;padding-top:2px;padding-left:3px}
.chk{display:flex;align-items:center;height:12px;line-height:12px;color:#111;white-space:nowrap}
.box{width:11px;height:11px;border:1px solid #999;margin-right:3px;position:relative;flex:none;background:#fff}
.box::after{content:"";position:absolute;left:2px;top:1px;width:6px;height:3px;border:solid #444;border-width:0 0 1.500px 1.500px;transform:rotate(-45deg)}

.r-snap{height:24px;padding-left:212px;margin-bottom:8px}
.r-snap .grp{background:#f5f5f5;gap:6px;padding-left:4px;padding-right:8px;width:691px}
.r-snap .t{gap:4px}
.r-snap .handle{margin-right:-3px}
.duo{display:flex;gap:1px;margin-left:-2px}
.duo .btn{width:50px;height:23px;padding:0 0 0 3px;gap:4px}
.duo .i{width:15px}
.h-mid{margin-left:2px}
.lab{color:#777;white-space:nowrap}
.lab.x{margin-left:2px}
.lab.dark{color:#222;margin-left:3px}
.lab.deg{margin-left:-2px}
.spin{height:23px;border:1px solid #888;display:flex;align-items:center;justify-content:flex-end;color:#999;padding-right:19px;position:relative;font-size:13px;flex:none}
.s57{width:57px;margin:0 -3px}
.s67{width:67px;padding-right:17px;margin-left:-3px}
.arrows{position:absolute;right:3px;top:4px;width:7px;height:13px;background:linear-gradient(135deg,transparent 50%,#555 50%) 0 0/3.500px 3.500px no-repeat,linear-gradient(225deg,transparent 50%,#555 50%) 3.500px 0/3.500px 3.500px no-repeat,linear-gradient(45deg,transparent 50%,#555 50%) 0 9px/3.500px 3.500px no-repeat,linear-gradient(-45deg,transparent 50%,#555 50%) 3.500px 9px/3.500px 3.500px no-repeat}
.emptybox{width:11px;height:11px;border:1px solid #999;background:#fff}

.lower{flex:1;position:relative;padding-left:12px;padding-right:4px}
.split{position:absolute;left:3px;top:0;width:3px;height:178px;background:radial-gradient(circle,#bbb 1px,transparent 1.200px) 0 0/3px 3px}
.tabletool{height:24px;margin:0 -4px 2px 2px;padding-left:3px;background:#f9f9f9;display:flex;align-items:center;gap:7px}
.nv{width:16px;display:flex;justify-content:center;flex:none}
.nv .i{width:12px;height:12px}
.tabletool .sep{margin-right:0}
.tabletool .s2{margin-right:-4px}
.total{margin-left:2px}
.gridbox{height:155px;display:flex;border:1px solid #bbb;background:#f0f0f0}
.gridmain{width:1074px;flex:none}
.tablewrap{height:139px;overflow:hidden;background:#fff}
.tbl{width:1074px;table-layout:fixed;border-collapse:collapse;font-size:12px;color:#111}
.k33{width:33px}.k73{width:73px}.k56{width:56px}.k36{width:36px}.k201{width:201px}.k167{width:167px}.k155{width:155px}.k61{width:61px}.k38{width:38px}.k39{width:39px}.k49{width:49px}.k11{width:11px}
.tbl th{height:19px;padding:0;background:linear-gradient(#fadc9e,#f2bc66);color:#5c0a84;font-weight:400;border:1px solid #c8c8c8;white-space:nowrap;overflow:hidden}
.tbl th.rh{background:#f0f0f0}
.tbl td{padding:0 2px;background:#ccffd5;border:1px solid #b8b8b8;overflow:hidden;line-height:11px;vertical-align:middle}
.h34 td{height:34px}.h29 td{height:29px}.h30 td{height:30px}
.tbl td.rh{background:#f0f0f0;text-align:center;font:11px "Liberation Mono",monospace}
.cur td{background:#8fd6da}
.tbl .cur td.rh{background:#fbd28a;color:#5c0a84}
.tbl .cur .nm{background:#a4e3cc}
.tbl .h30 td{vertical-align:top;padding-top:9px}
.tbl .h30 td.shape{padding-top:0}
.fz{border-left:2px solid #000!important}
.num{font:11px "Liberation Mono",monospace;letter-spacing:-.6px;white-space:nowrap}
.ctr{text-align:center}
.shape{padding:0!important}
.shape svg{width:201px;height:100%}
.sh-b{font:11px "Liberation Mono",monospace;fill:#111}
.sh-r{font:10px "Liberation Sans",sans-serif;fill:#f00}
.hbar{height:16px;display:flex;background:#f0f0f0}
.a-lf,.a-rt{width:18px;position:relative;flex:none}
.a-lf::after,.a-rt::after{content:"";position:absolute;left:50%;top:50%;width:6px;height:6px;margin:-3px;border:solid #555;border-width:2px 0 0 2px;transform:rotate(-45deg) translate(1px,1px)}
.a-rt::after{transform:rotate(135deg) translate(1px,1px)}
.hth{width:690px;background:#cdcdcd}
.htr{flex:1}
.gridbar{width:16px;height:139px}
.gt1{height:22px;flex:none}.gth{height:28px;flex:none;background:#cdcdcd}.gt2{flex:1}
.gridbar .a-up,.gridbar .a-dn{height:17px}

.annot{position:absolute;left:809px;top:547px;font:21px/24px "Noto Sans CJK SC",sans-serif;letter-spacing:2px;color:#f00;white-space:nowrap}
.annotdraw{position:absolute;left:731px;top:586px;width:120px;height:80px}

.status{height:22px;display:flex;gap:3px;background:#f0f0f0;padding-top:1px;border-top:1px solid #ddd}
.cell{height:19px;border:1px solid #d8d8d8;padding-left:1px;line-height:17px;white-space:nowrap;color:#111;flex:none}
.mono{font:11px/17px "Liberation Mono",monospace;letter-spacing:-.6px}
.s147{width:147px}.s77{width:77px}.s97{width:97px}.s47{width:47px}.s70{width:70px}
.grow{flex:1}

.taskbar{height:40px;background:#040b10;display:flex;align-items:center;position:relative;color:#fff}
.taskbar>*{flex:none}
.startbtn{width:48px;height:40px;background:#000;display:flex;align-items:center;justify-content:center}
.startbtn svg{width:16px;height:16px}
.search{width:344px;height:40px;background:#333;display:flex;align-items:center;padding-left:10px;color:#999;font-size:13px}
.ring{width:20px;height:20px;border:3px solid #e8e8e8;border-radius:50%;margin-right:6px}
.mic{width:12px;height:18px;margin-left:auto;margin-right:14px}
.tk{width:38px;height:40px;display:flex;align-items:center;justify-content:center;flex:none}
.tk svg{width:23px;height:23px}
.tk48{width:48px}.tk50{width:50px}.tk56{width:56px}.tk52{width:52px}
.tk.act{background:#26343b}
.tksep{width:2px;height:21px;background:#3a4248;margin:0 13px 0 3px;flex:none}
.link{display:flex;align-items:center;width:49px;margin-left:17px;color:#ddd}
.link .tksep{margin:0 10px 0 0}
.cpu{width:60px;display:flex;flex-direction:column;align-items:center;line-height:19px;color:#eee}
.tray{display:flex;align-items:center;margin-left:13px}
.chevup{width:12px;height:8px;margin-right:12px}
.tr16{width:16px;height:16px;margin-right:8px}
.kbd{width:24px;height:16px;margin:0 10px 0 0}
.zh{font-size:13px;margin-right:14px}
.sogou{width:15px;height:18px;background:#e8401c;border-radius:3px;font:700 13px/18px "Liberation Sans",sans-serif;text-align:center}
.clock{width:70px;margin-left:11px;display:flex;flex-direction:column;align-items:center;line-height:19px}
.notify{margin-left:14px}
.notify svg{width:16px;height:16px}
.ul{position:absolute;bottom:0;height:2px;background:#7cc0f0}
.u1{left:735px;width:29px}.u2{left:769px;width:37px}.u3{left:812px;width:28px}.u4{left:849px;width:29px}.u5{left:887px;width:29px}
```
